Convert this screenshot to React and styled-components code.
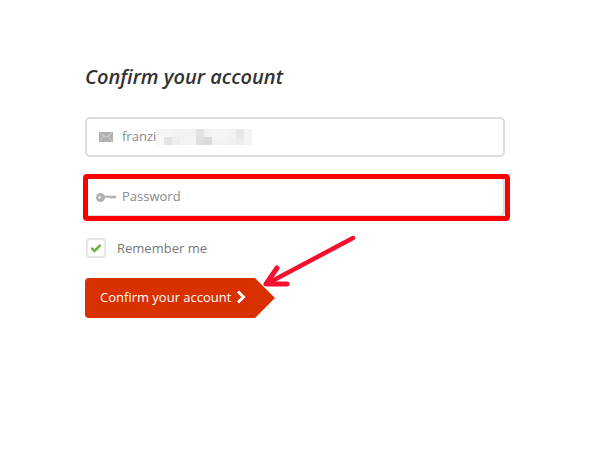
import React from "react";
import styled, { createGlobalStyle } from "styled-components";

const Global = createGlobalStyle`
  html, body { margin: 0; padding: 0; background: #fff; }
  body { font-family: "Open Sans", "Liberation Sans", sans-serif; }
`;
const Page = styled.div`
  position: relative;
  width: 598px;
  height: 449px;
  overflow: hidden;
  padding: 64px 0 0 85px;
  box-sizing: border-box;
`;
const Form = styled.form`
  width: 420px;
  display: flex;
  flex-direction: column;
`;
const Title = styled.h2`
  margin: 0 0 28px;
  font-size: 20px;
  line-height: 25px;
  font-style: italic;
  font-weight: 600;
  color: #333;
`;
const Field = styled.div`
  position: relative;
  height: 40px;
  box-sizing: border-box;
  border: 2px solid #dcdcdc;
  border-radius: 5px;
  display: flex;
  align-items: center;
  gap: 9px;
  padding-left: 12px;
  margin-bottom: ${(p) => p.$mb}px;
  background: #fff;
`;
const IconSlot = styled.span`
  width: 14px;
  display: flex;
  justify-content: center;
  flex: none;
`;
const Value = styled.span`
  font-size: 13px;
  color: #8a8a8a;
  margin-top: -2px;
`;
const Blur = styled.svg`
  position: absolute;
  left: 69px;
  top: 10px;
`;
const KeyIcon = styled.svg`
  flex: none;
  margin: 0 -3px;
`;
const Highlight = styled.div`
  position: absolute;
  left: -4px;
  top: -5px;
  width: 427px;
  height: 47px;
  box-sizing: border-box;
  border: 5px solid #ff0000;
  border-radius: 4px;
`;
const Remember = styled.label`
  display: flex;
  align-items: center;
  gap: 11px;
  margin: 0 0 20px 1px;
  font-size: 13px;
  color: #777;
  height: 20px;
`;
const Check = styled.span`
  width: 20px;
  height: 20px;
  box-sizing: border-box;
  border: 2px solid #e6e6e6;
  border-radius: 4px;
  display: flex;
  align-items: center;
  justify-content: center;
`;
const Submit = styled.button`
  position: relative;
  align-self: flex-start;
  width: 170px;
  height: 40px;
  border: 0;
  padding: 0 0 2px 15px;
  display: flex;
  align-items: center;
  gap: 5px;
  background: #d93000;
  border-radius: 4px 0 0 4px;
  color: #fff;
  white-space: nowrap;
  font: 13px "Open Sans", "Liberation Sans", sans-serif;
  &::after {
    content: "";
    position: absolute;
    left: 170px;
    top: 0;
    border-left: 20px solid #d93000;
    border-top: 20px solid transparent;
    border-bottom: 20px solid transparent;
  }
`;
const Arrow = styled.svg`
  position: absolute;
  left: 255px;
  top: 230px;
`;

const top = ["#f5f5f5","#f5f5f5","#f3f3f3","#f2f2f2","#f2f2f2","#e2e2e2","#f2f2f2","#f6f6f6","#f5f5f5","#f2f2f2","#e6e6e6","#f3f3f3"];
const bottom = ["#f8f8f8","#e4e4e4","#eeeeee","#f3f3f3","#f3f3f3","#dedede","#dadada","#f2f2f2","#f3f3f3","#f0f0f0","#ececec","#f3f3f3"];

export default function App() {
  return (
    <Page>
      <Global />
      <Form>
        <Title>Confirm your account</Title>
        <Field $mb={20}>
          <IconSlot>
            <svg width="14" height="10" viewBox="0 0 14 10">
              <rect width="14" height="10" fill="#b0b0b0" />
              <path d="M1 1l6 4.5L13 1M1 9l4.5-5M13 9L8.5 4" stroke="#d4d4d4" strokeWidth="1" fill="none" />
            </svg>
          </IconSlot>
          <Value>franzi</Value>
          <Blur width="96" height="16" viewBox="0 0 96 16">
            {top.map((f, i) => <rect key={i} x={i * 8} y="0" width="8" height="8" fill={f} />)}
            {bottom.map((f, i) => <rect key={i} x={i * 8} y="8" width="8" height="8" fill={f} />)}
          </Blur>
        </Field>
        <Field $mb={21}>
          <Highlight />
          <IconSlot>
            <KeyIcon width="20" height="9" viewBox="0 0 20 9">
              <path
                fillRule="evenodd"
                d="M4.5 0a4.5 4.5 0 1 1 0 9a4.5 4.5 0 1 1 0-9zM3.6 3.2a1.3 1.3 0 1 0 0 2.6a1.3 1.3 0 1 0 0-2.6z"
                fill="#b0b0b0"
              />
              <path d="M8 2.8h12v2l-1 1.2-1-1.2-1 1.2-1-1.2-1 1.2-1-1.2H8z" fill="#b0b0b0" />
            </KeyIcon>
          </IconSlot>
          <Value>Password</Value>
        </Field>
        <Remember>
          <Check>
            <svg width="12" height="10" viewBox="0 0 12 10">
              <path d="M1.5 5l3 3 6-6" stroke="#74b042" strokeWidth="2.6" fill="none" />
            </svg>
          </Check>
          Remember me
        </Remember>
        <Submit type="button">
          Confirm your account
          <svg width="10" height="14" viewBox="0 0 10 14">
            <path d="M2 1.5l5.5 5.5-5.5 5.5" stroke="#fff" strokeWidth="3" fill="none" />
          </svg>
        </Submit>
      </Form>
      <Arrow width="110" height="65" viewBox="0 0 110 65">
        <path d="M98 8L17 51" stroke="#f5102f" strokeWidth="4.5" strokeLinecap="round" fill="none" />
        <path d="M22 38L11 54 32 54" stroke="#f5102f" strokeWidth="5" strokeLinecap="round" strokeLinejoin="round" fill="none" />
      </Arrow>
    </Page>
  );
}
